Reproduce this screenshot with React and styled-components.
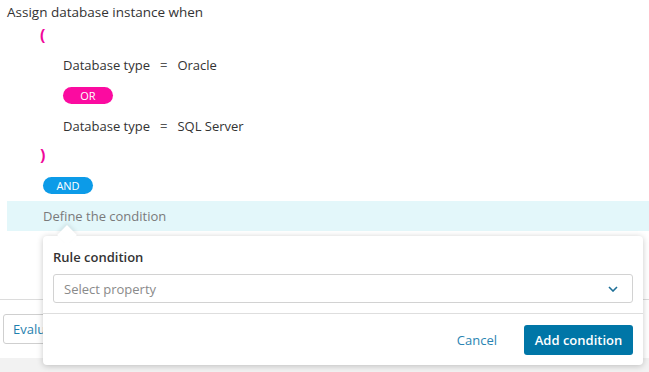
import React from 'react';
import styled, {createGlobalStyle, css} from 'styled-components';

const GlobalStyle = createGlobalStyle`
    html, body {
        margin: 0;
        padding: 0;
        background: #f2f2f2;
        font-family: "Open Sans", "Liberation Sans", sans-serif;
        font-size: 13px;
        color: #333;
    }
`

const Shell = styled.div`
    position: relative;
    width: 649px;
    height: 372px;
    background: #f2f2f2;
`
const Page = styled.div`
    height: 358px;
    background: #fff;
    display: flex;
    flex-direction: column;
`
const Editor = styled.div`
    display: flex;
    flex-direction: column;
    padding-left: 7px;
    flex: 1;
`
const Title = styled.div`
    height: 24px;
    line-height: 24px;
    font-size: 13.5px;
    font-weight: 500;
`
const Paren = styled.div`
    height: 22px;
    line-height: 22px;
    margin-left: 33px;
    color: #f0069a;
    font-weight: 700;
    font-size: 16px;
    ${props => props.close && css`
        margin-top: 3px;
    `}
`
const Group = styled.div`
    display: flex;
    flex-direction: column;
    align-items: flex-start;
    padding-left: 56px;
`
const ConditionRow = styled.div`
    display: flex;
    align-items: center;
    height: 30px;
    margin-top: ${props => props.first ? '4px' : '7px'};
    gap: 10px;
`
const Equals = styled.span`
    color: #555;
`
const Pill = styled.div`
    width: 50px;
    height: 17px;
    border-radius: 9px;
    display: flex;
    align-items: center;
    justify-content: center;
    color: #fff;
    font-size: 11px;
    font-weight: 500;
    margin-top: 7px;
    background: ${props => props.kind === 'or' ? '#fb0ba0' : '#0c9be8'};
    ${props => props.kind === 'and' && css`
        margin-left: 36px;
        margin-top: 11px;
    `}
`
const Band = styled.div`
    margin-top: 7px;
    height: 30px;
    display: flex;
    align-items: center;
    padding-left: 36px;
    background: #e3f7fa;
    color: #7a7a7a;
`
const Footer = styled.div`
    border-top: 1px solid #dcdcdc;
    padding: 14px 0 0 3px;
    height: 59px;
    box-sizing: border-box;
`
const GhostButton = styled.button`
    height: 30px;
    padding: 0 9px;
    border: 1px solid #cfcfcf;
    border-radius: 3px;
    background: #fff;
    color: #1f7fae;
    font-family: inherit;
    font-size: 13px;
`
const Popover = styled.div`
    position: absolute;
    z-index: 2;
    left: 43px;
    top: 236px;
    width: 600px;
    height: 129px;
    background: #fff;
    border-radius: 4px;
    box-shadow: 0 1px 6px rgba(0, 0, 0, 0.22);
    display: flex;
    flex-direction: column;
    &::before {
        content: '';
        position: absolute;
        left: 17px;
        top: -8px;
        width: 14px;
        height: 14px;
        background: #fff;
        transform: rotate(45deg);
        box-shadow: -2px -2px 4px rgba(0, 0, 0, 0.08);
    }
`
const PopoverBody = styled.div`
    position: relative;
    padding: 11px 10px 10px 10px;
    border-bottom: 1px solid #dedede;
`
const Label = styled.div`
    font-weight: 600;
    line-height: 20px;
    margin-bottom: 7px;
`
const Select = styled.div`
    height: 29px;
    box-sizing: border-box;
    border: 1px solid #d2d2d2;
    border-radius: 3px;
    display: flex;
    align-items: center;
    justify-content: space-between;
    padding: 0 14px 0 10px;
    color: #8a8a8a;
`
const Actions = styled.div`
    flex: 1;
    display: flex;
    align-items: center;
    justify-content: flex-end;
    padding-right: 10px;
    gap: 27px;
`
const LinkButton = styled.span`
    color: #2a84b2;
`
const PrimaryButton = styled.button`
    height: 30px;
    width: 109px;
    border: none;
    border-radius: 3px;
    background: #0076a7;
    color: #fff;
    font-family: inherit;
    font-size: 13px;
    font-weight: 600;
`

function Chevron() {
    return (
        <svg width="10" height="6" viewBox="0 0 10 6">
            <path d="M1 1 L5 5 L9 1" fill="none" stroke="#1d6f97" strokeWidth="1.6" />
        </svg>
    )
}

export default function App() {
    return (
        <Shell>
            <GlobalStyle />
            <Page>
                <Editor>
                    <Title>Assign database instance when</Title>
                    <Paren>(</Paren>
                    <Group>
                        <ConditionRow first>
                            <span>Database type</span>
                            <Equals>=</Equals>
                            <span>Oracle</span>
                        </ConditionRow>
                        <Pill kind="or">OR</Pill>
                        <ConditionRow>
                            <span>Database type</span>
                            <Equals>=</Equals>
                            <span>SQL Server</span>
                        </ConditionRow>
                    </Group>
                    <Paren close>)</Paren>
                    <Pill kind="and">AND</Pill>
                    <Band>Define the condition</Band>
                </Editor>
                <Footer>
                    <GhostButton>Evaluate</GhostButton>
                </Footer>
            </Page>
            <Popover>
                <PopoverBody>
                    <Label>Rule condition</Label>
                    <Select>
                        <span>Select property</span>
                        <Chevron />
                    </Select>
                </PopoverBody>
                <Actions>
                    <LinkButton>Cancel</LinkButton>
                    <PrimaryButton>Add condition</PrimaryButton>
                </Actions>
            </Popover>
        </Shell>
    )
}
